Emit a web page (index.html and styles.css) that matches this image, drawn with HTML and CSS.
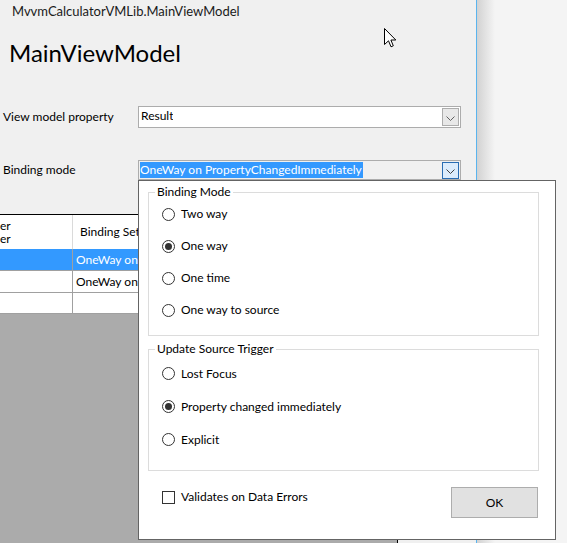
FILE: index.html
```html
<!DOCTYPE html>
<html>
<head>
<meta charset="utf-8">
<link rel="stylesheet" href="styles.css">
</head>
<body>
<div class="screen">
  <div class="window">
    <div class="title">MvvmCalculatorVMLib.MainViewModel</div>
    <h1 class="heading">MainViewModel</h1>
    <div class="form">
      <div class="row">
        <div class="label">View model property</div>
        <div class="combo editable">
          <div class="value">Result</div>
          <div class="drop"><svg width="9" height="5" viewBox="0 0 9 5"><path d="M0.5 0.5 L4.5 4.5 L8.5 0.5" fill="none" stroke="#606060" stroke-width="1"/></svg></div>
        </div>
      </div>
      <div class="row row2">
        <div class="label">Binding mode</div>
        <div class="combo readonly">
          <div class="value"><span class="sel">OneWay on PropertyChangedImmediately</span></div>
          <div class="drop focus"><svg width="9" height="5" viewBox="0 0 9 5"><path d="M0.5 0.5 L4.5 4.5 L8.5 0.5" fill="none" stroke="#404040" stroke-width="1"/></svg></div>
        </div>
      </div>
    </div>
    <div class="grid">
      <div class="grow head">
        <div class="gc c1"><div class="cliptext">er<br>er</div></div>
        <div class="gc c2"><span class="ht">Binding Set</span></div>
        <div class="gc c3"></div>
      </div>
      <div class="grow sel-row">
        <div class="gc c1"></div>
        <div class="gc c2">OneWay on</div>
        <div class="gc c3"></div>
      </div>
      <div class="grow">
        <div class="gc c1"></div>
        <div class="gc c2">OneWay on</div>
        <div class="gc c3"></div>
      </div>
      <div class="grow last">
        <div class="gc c1"></div>
        <div class="gc c2"></div>
        <div class="gc c3"></div>
      </div>
    </div>

    <div class="popup">
      <fieldset class="group g1">
        <legend>Binding Mode</legend>
        <div class="opts">
          <div class="opt"><span class="radio"></span><span>Two way</span></div>
          <div class="opt"><span class="radio on"></span><span>One way</span></div>
          <div class="opt"><span class="radio"></span><span>One time</span></div>
          <div class="opt"><span class="radio"></span><span>One way to source</span></div>
        </div>
      </fieldset>
      <fieldset class="group g2">
        <legend>Update Source Trigger</legend>
        <div class="opts">
          <div class="opt"><span class="radio"></span><span>Lost Focus</span></div>
          <div class="opt"><span class="radio on"></span><span>Property changed immediately</span></div>
          <div class="opt"><span class="radio"></span><span>Explicit</span></div>
        </div>
      </fieldset>
      <div class="footer">
        <div class="check"><span class="box"></span><span>Validates on Data Errors</span></div>
        <div class="btn">OK</div>
      </div>
    </div>

    <svg class="cursor" width="13" height="20" viewBox="0 0 13 20">
      <path d="M0.5 0.5 L0.5 16.5 L4.5 12.8 L7 18.8 L9.3 17.8 L6.9 12 L11.8 12 Z" fill="#fff" stroke="#000" stroke-width="1" stroke-linejoin="miter"/>
    </svg>
  </div>
  <div class="shadow"></div>
</div>
</body>
</html>
```
FILE: styles.css
```css
* { box-sizing: border-box; }
html, body { margin: 0; padding: 0; }
body {
  width: 567px;
  height: 543px;
  overflow: hidden;
  background: #f4f4f4;
  font-family: Lato, "Noto Sans", sans-serif;
  font-size: 12px;
  color: #000;
}
.screen { display: flex; height: 543px; }
.window {
  position: relative;
  width: 477px;
  height: 543px;
  background: #f0f0f0;
  border-right: 1px solid #5ab4ee;
  display: flex;
  flex-direction: column;
  flex: none;
}
.shadow {
  width: 18px;
  height: 543px;
  background: linear-gradient(to right, #d2d2d2, #f4f4f4);
  flex: none;
}
.title {
  padding: 3px 0 0 12px;
  font-size: 13px;
  line-height: 16px;
  color: #1a1a1a;
}
.heading {
  margin: 17px 0 0 9px;
  font-size: 24px;
  font-weight: normal;
  line-height: 34px;
}
.form { display: flex; flex-direction: column; gap: 32px; margin-top: 36px; }
.row { display: flex; align-items: center; height: 22px; }
.row2 { height: 20px; }
.label { width: 138px; padding-left: 3px; line-height: 16px; }
.combo {
  width: 323px;
  height: 22px;
  border: 1px solid #acacac;
  background: #fff;
  display: flex;
  align-items: flex-start;
  justify-content: space-between;
}
.combo.readonly { height: 20px; background: #f0f0f0; }
.value { padding: 1px 0 0 2px; line-height: 16px; white-space: nowrap; overflow: hidden; }
.readonly .value { padding: 1px 0 0 1px; }
.sel { background: #3399ff; color: #fff; display: inline-block; line-height: 16px; padding-right: 1px; }
.drop {
  width: 17px;
  height: 18px;
  margin: 1px 1px 0 0;
  border: 1px solid #adadad;
  background: #e8e8e8;
  display: flex;
  align-items: center;
  justify-content: center;
  flex: none;
}
.drop svg { margin-top: 2px; }
.readonly .drop { height: 17px; }
.drop.focus { border-color: #2a6db3; background: #dcecfc; }

.grid {
  margin-top: 34px;
  width: 398px;
  flex: 1;
  background: #ababab;
  border-top: 1px solid #000;
  border-right: 1px solid #000;
}
.grow { display: flex; height: 22px; background: #fff; border-bottom: 1px solid #a0a0a0; }
.grow.head { height: 34px; border-bottom: none; }
.grow.last { height: 21px; }
.gc { line-height: 16px; white-space: nowrap; overflow: hidden; display: flex; align-items: center; }
.c1 { width: 73px; border-right: 1px solid #a0a0a0; }
.head .c1 { border-right-color: #dadada; }
.c2 { width: 65px; padding-left: 3px; }
.c3 { flex: 1; }
.head .c2 { padding-left: 7px; }
.cliptext { line-height: 13px; }
.sel-row { background: #3399ff; color: #fff; border-bottom-color: #a0a0a0; }
.sel-row .c1 { border-right-color: #a0a0a0; }

.popup {
  position: absolute;
  left: 138px;
  top: 180px;
  width: 418px;
  height: 360px;
  background: #fff;
  border: 1px solid #646464;
  padding: 3px 16px 0 9px;
  display: flex;
  flex-direction: column;
  z-index: 2;
}
.group {
  margin: 0;
  border: 1px solid #dcdcdc;
  padding: 0 0 9px 13px;
  min-width: 0;
}
.group legend {
  padding: 0 2px;
  margin-left: -7px;
  line-height: 16px;
  color: #000;
}
.opts { display: flex; flex-direction: column; margin-top: -2px; }
.opt { height: 32px; display: flex; align-items: center; gap: 6px; line-height: 16px; }
.g2 { margin-top: 5px; padding-bottom: 14px; }
.g2 .opts { margin-top: 0; }
.g2 .opt { height: 33px; }
.radio {
  width: 13px; height: 13px;
  border: 1px solid #333;
  border-radius: 50%;
  background: #fff;
  flex: none;
  display: flex;
  align-items: center;
  justify-content: center;
}
.radio.on::after {
  content: "";
  width: 7px; height: 7px;
  border-radius: 50%;
  background: #333;
}
.footer {
  display: flex;
  justify-content: space-between;
  align-items: flex-start;
  margin-top: 16px;
  padding-right: 1px;
}
.check { display: flex; align-items: center; gap: 6px; padding-left: 14px; line-height: 16px; margin-top: 2px; }
.box { width: 13px; height: 13px; border: 1px solid #333; background: #fff; flex: none; }
.btn {
  width: 87px;
  height: 31px;
  background: #e1e1e1;
  border: 1px solid #adadad;
  display: flex;
  align-items: center;
  justify-content: center;
  line-height: 16px;
}
.cursor { position: absolute; left: 384px; top: 28px; z-index: 3; }
```
